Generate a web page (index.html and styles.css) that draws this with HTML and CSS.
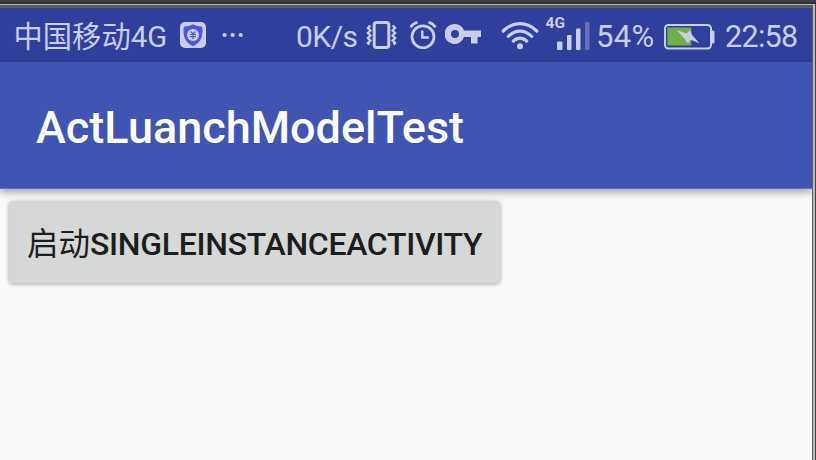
FILE: index.html
```html
<!DOCTYPE html>
<html lang="zh-CN">
<head>
<meta charset="utf-8">
<title>ActLuanchModelTest</title>
<link rel="stylesheet" href="styles.css">
</head>
<body>
<div class="frame">
  <main class="screen">
    <div class="status">
      <span class="carrier">中国移动4G</span>
      <svg class="shield" width="26" height="26" viewBox="0 0 26 26">
        <rect width="26" height="26" rx="5" fill="#c9cdea"/>
        <path d="M13 2.2Q17 4.4 21.5 4.5Q22.5 5 22.5 9C22.5 17 19 21.5 13 24.2C7 21.5 3.5 17 3.5 9Q3.5 5 4.5 4.5Q9 4.400 13 2.200Z" fill="#4d57d8"/>
        <circle cx="13" cy="13" r="6" fill="#c9cdea"/>
        <path d="M10.600 9.500L13 12L15.400 9.500M10 12.500H16M10 14.700H16M13 12V17" fill="none" stroke="#4d57d8" stroke-width="1.200"/>
      </svg>
      <svg class="dots" width="22" height="6" viewBox="0 0 22 6" fill="#c9cdea"><circle cx="2.500" cy="3" r="2.100"/><circle cx="10.600" cy="3" r="2.100"/><circle cx="18.700" cy="3" r="2.100"/></svg>
      <span class="speed">0K/s</span>
      <svg class="vibrate" width="32" height="28" viewBox="0 0 32 28" fill="none" stroke="#c9cdea">
        <rect x="8.200" y="1.500" width="14.600" height="25" rx="2.500" stroke-width="3"/>
        <path d="M4.300 4.500L2 7L4.300 9.500L2 12L4.300 14.500L2 17L4.300 19.500L2 22L3.500 23.500M26.700 4.500L29 7L26.700 9.500L29 12L26.700 14.500L29 17L26.700 19.500L29 22L27.500 23.500" stroke-width="2.500"/>
      </svg>
      <svg class="alarm" width="28" height="28" viewBox="0 0 28 28" fill="none" stroke="#c9cdea">
        <circle cx="14" cy="15.800" r="11" stroke-width="2.800"/>
        <path d="M1.500 6.200Q4 2.500 8.500 1.300M26.500 6.200Q24 2.500 19.500 1.300" stroke-width="2.600"/>
        <path d="M13.300 9.500V16.500H19.800" stroke-width="2.400"/>
      </svg>
      <svg class="key" width="36" height="21" viewBox="0 0 36 21" fill="#c9cdea">
        <path fill-rule="evenodd" d="M10 0A10 10 0 0 1 19 6.500H36V13H32.500V19.500H26V13H19A10 10 0 1 1 10 0ZM10 6A4 4 0 1 0 10 14A4 4 0 1 0 10 6Z"/>
      </svg>
      <svg class="wifi" width="38" height="29" viewBox="0 0 38 29" fill="none" stroke="#c9cdea" stroke-width="3.200" stroke-linecap="round">
        <path d="M2.200 10C12 .1 26 .1 35.800 10M7.300 15.300C14.500 8.300 23.500 8.300 30.700 15.300M12.300 20C16.500 16.200 21.500 16.200 25.700 20"/>
        <circle cx="19" cy="25.300" r="3" fill="#c9cdea" stroke="none"/>
      </svg>
      <div class="cell">
        <span class="net">4G</span>
        <svg class="bars" width="33" height="28" viewBox="0 0 33 28" fill="#c9cdea"><rect y="19.500" width="5.500" height="8.500" rx="1"/><rect x="10" y="13" width="4.500" height="15" rx="1"/><rect x="19" y="6.500" width="4.500" height="21.500" rx="1"/><rect x="28" width="4.500" height="28" rx="1" fill="#6570b4"/></svg>
      </div>
      <span class="percent">54%</span>
      <svg class="battery" width="51" height="26" viewBox="0 0 51 26">
        <rect x="1" y="1" width="46" height="23.500" rx="3.500" fill="none" stroke="#c9cdea" stroke-width="2"/>
        <path d="M48 6.500H49Q50.500 6.500 50.500 8V18Q50.500 19.500 49 19.500H48Z" fill="#c9cdea"/>
        <rect x="3.300" y="3.500" width="24" height="18" fill="#6fb145"/>
        <path d="M12.500 6L22.500 9.500L26 6L28.500 11.500L35.500 19.300L26.500 15.800L24 19.500L19.500 13.500Z" fill="#c9cdea"/>
      </svg>
      <span class="clock">22:58</span>
    </div>
    <header class="appbar"><h1>ActLuanchModelTest</h1></header>
    <section class="content"><button class="launch"><span class="cjk">启动</span><span class="latin">SINGLEINSTANCEACTIVITY</span></button></section>
  </main>
</div>
</body>
</html>
```
FILE: styles.css
```css
* { box-sizing: border-box; }
body { margin: 0; font-family: Roboto, "Noto Sans CJK SC", sans-serif; }
.frame {
  height: 460px;
  padding: 8px 4px 0 0;
  overflow: hidden;
  background:
    linear-gradient(#3c4043 0 2px, #2d3032 2px 4px, transparent 4px) top / 100% 4px no-repeat,
    linear-gradient(#b9bab9, #b9bab9) 0 4px / 815px 1px no-repeat,
    linear-gradient(#b9bab9, #b9bab9) 813px 4px / 2px 456px no-repeat,
    linear-gradient(#444, #444) 815px 4px / 1px 456px no-repeat,
    #5a5d5e;
}
.screen { height: 452px; background: #fafafa; overflow: hidden; }
.status {
  height: 54px;
  display: flex;
  align-items: flex-start;
  background: #303f9b;
  color: #c9cdea;
  font-size: 30.500px;
  line-height: 36px;
  white-space: nowrap;
}
.status > * { flex: none; }
.status > span { margin-top: 11px; }
.carrier { width: 154px; margin-left: 13.500px; font-size: 29.300px; font-weight: 400; }
.shield { margin: 14px 0 0 12px; }
.dots { margin: 24px 0 0 16.500px; }
.speed { width: 62px; margin-left: 52px; font-size: 30px; letter-spacing: -.5px; }
.vibrate { margin: 13px 0 0 8px; }
.alarm { margin: 13px 0 0 10.500px; }
.key { margin: 15.500px 0 0 8px; }
.wifi { margin: 13px 0 0 20px; }
.cell { width: 50px; height: 54px; margin-left: 7px; }
.net { display: block; height: 14px; margin-top: 8px; font-size: 15.500px; line-height: 14px; font-weight: 700; }
.bars { display: block; margin: -8px 0 0 11px; }
.percent { width: 60px; margin-left: .5px; font-size: 31px; letter-spacing: .3px; }
.battery { margin: 15.500px 0 0 8px; }
.clock { margin-left: 10px; font-size: 30.500px; letter-spacing: -.7px; }
.appbar {
  position: relative;
  height: 126px;
  padding: 0 36px;
  display: flex;
  align-items: center;
  background: #4055b2;
  border-bottom: 1px solid #6575b9;
  box-shadow: 0 3px 8px rgba(0, 0, 0, .38);
  height: 127px;
}
h1 { margin: 6px 0 0; color: #fff; font-size: 45px; line-height: 54px; font-weight: 500; }
.content { padding: 12px 9px; }
.launch {
  width: 491px;
  height: 82px;
  padding: 3px 0 0 18px;
  display: flex;
  align-items: center;
  border: 0;
  border-radius: 4px;
  background: #d6d8d7;
  color: #1d1d1d;
  box-shadow: 0 1px 4px rgba(0, 0, 0, .34);
  font: 500 32px/40px Roboto, "Noto Sans CJK SC", sans-serif;
  white-space: nowrap;
}
.cjk { width: 63px; padding-top: 3px; font-size: 31.500px; font-weight: 400; }
.latin { letter-spacing: -.3px; }
```
